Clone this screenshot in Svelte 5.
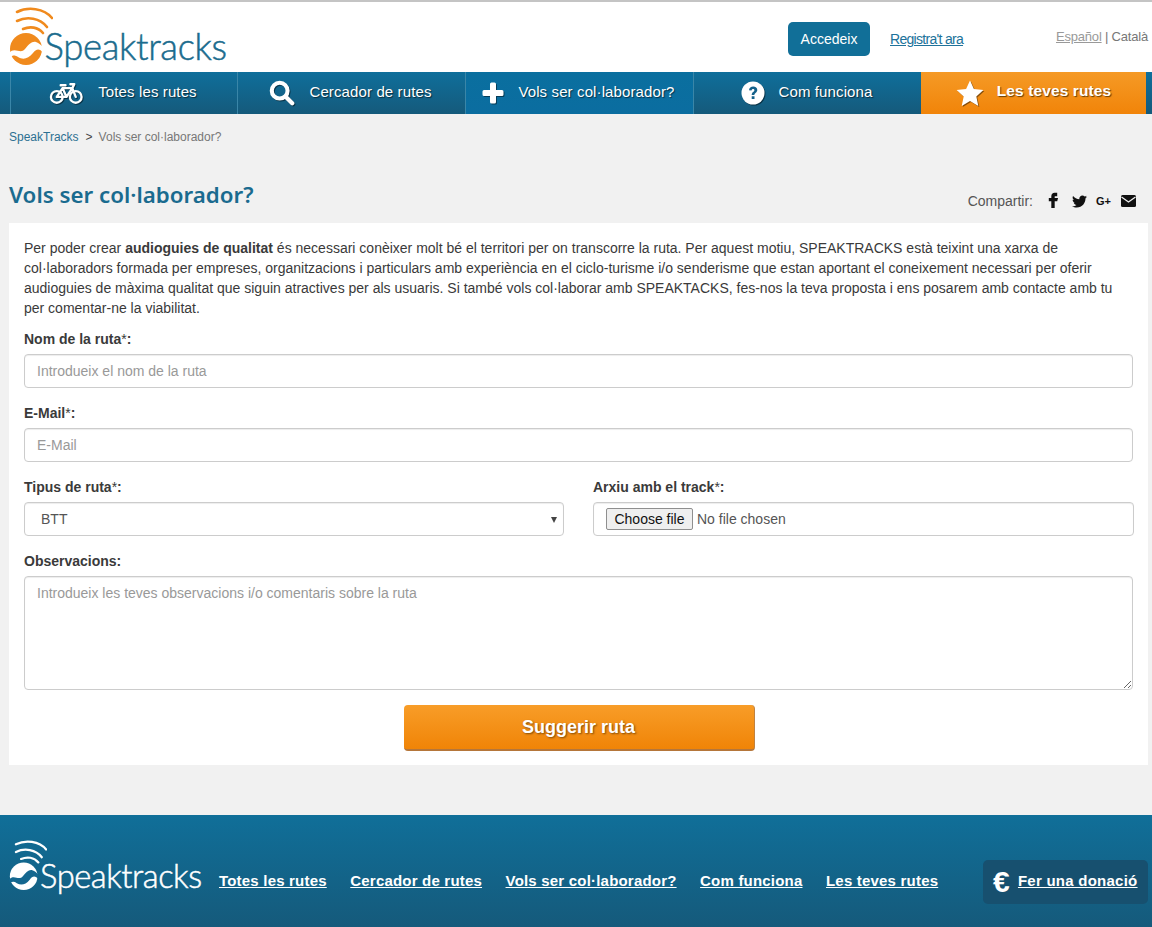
<script>
  const navItems = [
    { label: 'Totes les rutes', icon: 'bike' },
    { label: 'Cercador de rutes', icon: 'search' },
    { label: 'Vols ser col·laborador?', icon: 'plus', active: true },
    { label: 'Com funciona', icon: 'question' },
    { label: 'Les teves rutes', icon: 'star', accent: true }
  ];
  const footerLinks = ['Totes les rutes', 'Cercador de rutes', 'Vols ser col·laborador?', 'Com funciona', 'Les teves rutes'];
</script>

{#snippet mark(color, waveColor)}
  <svg class="mark" viewBox="0 0 44 58" aria-hidden="true">
    <g fill="none" stroke={color} stroke-width="2.6" stroke-linecap="round">
      <path d="M8 5 C19 -0.5 35 1 43 11" />
      <path d="M8 14 C18 9 31 11 38 20" />
      <path d="M14 22 C21 19 29 20 34 26" />
    </g>
    <circle cx="17" cy="42" r="16" fill={color} />
    <path d="M0 46 C6 39 11 48 16 42 C20 37 23 34 27 35 C30 36 32 38 34 40 L33.500 45 C30 41 27 42 24 46 C19 52 14 53 9 50 C6 48 4 48 1 50 Z" fill={waveColor} />
  </svg>
{/snippet}

<div class="page">
  <header class="top">
    <a class="logo" href="#home">
      {@render mark('#f08a1d', '#ffffff')}
      <span class="logo-text">Speaktracks</span>
    </a>
    <div class="account">
      <a class="login" href="#login">Accedeix</a>
      <a class="register" href="#register">Registra't ara</a>
    </div>
    <div class="langs"><a href="#es">Español</a> | Català</div>
  </header>

  <nav class="nav">
    {#each navItems as item}
      <a class="nav-item" class:active={item.active} class:accent={item.accent} href="#nav">
        <span class="nav-icon">
          {#if item.icon === 'bike'}
            <svg width="35" height="24" viewBox="0 0 36 24" fill="none" stroke="#fff" stroke-width="2.4" stroke-linecap="round" stroke-linejoin="round">
              <circle cx="8" cy="16" r="6" />
              <circle cx="27.5" cy="16" r="6" />
              <path d="M8 16 L14 7 L24 7 L27.5 16 M14 7 L18 16 L8 16 M18 16 L24 7 M12 4 H17 M22 3 H26 L24 7" />
            </svg>
          {:else if item.icon === 'search'}
            <svg width="26" height="26" viewBox="0 0 28 28" fill="none" stroke="#fff" stroke-linecap="round">
              <circle cx="11.5" cy="11.5" r="8.5" stroke-width="4.4" />
              <path d="M18 18 L25 25" stroke-width="4.6" />
            </svg>
          {:else if item.icon === 'plus'}
            <svg width="22" height="22" viewBox="0 0 22 22" fill="#fff">
              <path d="M8 2 a1.5 1.5 0 0 1 1.5 -1.5 h3 A1.5 1.5 0 0 1 14 2 V8 H20 a1.5 1.5 0 0 1 1.5 1.5 v3 A1.5 1.5 0 0 1 20 14 H14 V20 a1.5 1.5 0 0 1 -1.5 1.5 h-3 A1.5 1.5 0 0 1 8 20 V14 H2 a1.5 1.5 0 0 1 -1.5 -1.5 v-3 A1.5 1.5 0 0 1 2 8 H8 Z" />
            </svg>
          {:else if item.icon === 'question'}
            <svg width="24" height="24" viewBox="0 0 24 24">
              <circle cx="12" cy="12" r="11.5" fill="#fff" />
              <path d="M8 9.2 C8.2 6.8 10 5.5 12.2 5.5 C14.6 5.5 16.3 7 16.3 9 C16.3 11.6 13.4 11.8 13.4 14 H10.7 C10.7 10.8 13.4 10.8 13.4 9.2 C13.4 8.4 12.8 7.9 12 7.9 C11.2 7.9 10.7 8.5 10.5 9.5 Z M10.7 15.2 H13.5 V18 H10.7 Z" fill="#14618a" />
            </svg>
          {:else}
            <svg width="28" height="27" viewBox="0 0 28 27" fill="#fff">
              <path d="M14 0.5 L17.9 9 L27.4 10.1 L20.3 16.4 L22.3 26 L14 21.1 L5.7 26 L7.7 16.4 L0.6 10.1 L10.1 9 Z" />
            </svg>
          {/if}
        </span>
        <span class="nav-label">{item.label}</span>
      </a>
    {/each}
  </nav>

  <main class="main">
    <div class="crumbs"><a href="#home">SpeakTracks</a><span class="sep">&gt;</span><span>Vols ser col·laborador?</span></div>

    <div class="title-row">
      <h1>Vols ser col·laborador?</h1>
      <div class="share">
        <span class="share-label">Compartir:</span>
        <svg class="s-fb" width="14" height="16" viewBox="4 3 16 19" fill="#111"><path d="M14 8 h3 V4 h-3 c-2.5 0-4 1.8-4 4 v2 H7 v4 h3 v8 h4 v-8 h3 l1-4 h-4 V8.500 c0-.3.2-.5.500-.5 z" /></svg>
        <svg class="s-tw" width="15" height="15" viewBox="0 0 512 512" fill="#111"><path d="M459.37 151.716c.325 4.548.325 9.097.325 13.645 0 138.72-105.583 298.558-298.558 298.558-59.452 0-114.68-17.219-161.137-47.106 8.447.974 16.568 1.299 25.34 1.299 49.055 0 94.213-16.568 130.274-44.832-46.132-.975-84.792-31.188-98.112-72.772 6.498.974 12.995 1.624 19.818 1.624 9.421 0 18.843-1.3 27.614-3.573-48.081-9.747-84.143-51.98-84.143-102.985v-1.299c13.969 7.797 30.214 12.67 47.431 13.319-28.264-18.843-46.781-51.005-46.781-87.391 0-19.492 5.197-37.36 14.294-52.954 51.655 63.675 129.3 105.258 216.365 109.807-1.624-7.797-2.599-15.918-2.599-24.04 0-57.828 46.782-104.934 104.934-104.934 30.213 0 57.502 12.67 76.67 33.137 23.715-4.548 46.456-13.32 66.599-25.34-7.798 24.366-24.366 44.833-46.132 57.827 21.117-2.273 41.584-8.122 60.426-16.243-14.292 20.791-32.161 39.308-52.628 54.253z" /></svg>
        <span class="s-gp">G+</span>
        <svg class="s-mail" width="15" height="12" viewBox="0 0 15 12"><rect width="15" height="12" rx="1.500" fill="#111" /><path d="M0.500 2 L7.500 7 L14.500 2" fill="none" stroke="#f1f1f1" stroke-width="1.300" /></svg>
      </div>
    </div>

    <section class="panel">
      <p class="intro">Per poder crear <strong>audioguies de qualitat</strong> és necessari conèixer molt bé el territori per on transcorre la ruta. Per aquest motiu, SPEAKTRACKS està teixint una xarxa de col·laboradors formada per empreses, organitzacions i particulars amb experiència en el ciclo-turisme i/o senderisme que estan aportant el coneixement necessari per oferir audioguies de màxima qualitat que siguin atractives per als usuaris. Si també vols col·laborar amb SPEAKTACKS, fes-nos la teva proposta i ens posarem amb contacte amb tu per comentar-ne la viabilitat.</p>

      <form class="form" onsubmit={(e) => e.preventDefault()}>
        <div class="field">
          <label for="nom">Nom de la ruta<span class="req">*</span>:</label>
          <input id="nom" class="control" type="text" placeholder="Introdueix el nom de la ruta" />
        </div>
        <div class="field">
          <label for="mail">E-Mail<span class="req">*</span>:</label>
          <input id="mail" class="control" type="text" placeholder="E-Mail" />
        </div>
        <div class="cols">
          <div class="field">
            <label for="tipus">Tipus de ruta<span class="req">*</span>:</label>
            <div class="select-wrap">
              <select id="tipus" class="control select"><option>BTT</option></select>
            </div>
          </div>
          <div class="field">
            <label for="arxiu">Arxiu amb el track<span class="req">*</span>:</label>
            <div class="control file">
              <button id="arxiu" class="file-btn" type="button">Choose file</button>
              <span>No file chosen</span>
            </div>
          </div>
        </div>
        <div class="field">
          <label for="obs">Observacions:</label>
          <textarea id="obs" class="control area" placeholder="Introdueix les teves observacions i/o comentaris sobre la ruta"></textarea>
        </div>
        <div class="actions"><button class="submit" type="submit">Suggerir ruta</button></div>
      </form>
    </section>
  </main>

  <footer class="footer">
    <a class="logo foot-logo" href="#home">
      {@render mark('#ffffff', '#14678f')}
      <span class="logo-text">Speaktracks</span>
    </a>
    <div class="foot-links">
      {#each footerLinks as link}
        <a href="#f">{link}</a>
      {/each}
    </div>
    <div class="donate"><span class="euro">€</span><a href="#d">Fer una donació</a></div>
  </footer>
</div>

<style>
  :global(body) {
    margin: 0;
    background: #f1f1f1;
    font-family: "Liberation Sans", Arial, sans-serif;
    font-size: 14px;
    color: #333;
  }
  .page {
    height: 927px;
    overflow: hidden;
    display: flex;
    flex-direction: column;
  }
  a { color: inherit; }

  .top {
    height: 70px;
    flex: none;
    display: flex;
    align-items: flex-start;
    background: #fff;
    border-top: 2px solid #c4c4c4;
  }
  .logo {
    display: flex;
    text-decoration: none;
    color: #1b6c8e;
  }
  .top .logo { margin: 5px 0 0 9px; width: 779px; }
  .mark { width: 44px; height: 58px; flex: none; }
  .logo-text {
    font-family: Lato, sans-serif;
    font-weight: 300;
    font-size: 36.500px;
    line-height: 44px;
    letter-spacing: -0.35px;
    -webkit-text-stroke: 0.5px currentColor;
    margin: 17px 0 0 -8.500px;
  }
  .account { display: flex; align-items: center; margin-top: 20px; }
  .login {
    width: 82px;
    height: 34px;
    display: flex;
    align-items: center;
    justify-content: center;
    background: #116f98;
    color: #fff;
    border-radius: 5px;
    text-decoration: none;
    font-size: 14px;
  }
  .register {
    margin-left: 20px;
    color: #20729a;
    font-size: 14px;
    letter-spacing: -0.7px;
    width: 166px;
  }
  .langs {
    margin-top: 27px;
    font-size: 13px;
    letter-spacing: -0.2px;
    color: #777;
    white-space: nowrap;
    width: 96px;
  }
  .langs a { color: #999; }

  .nav {
    height: 42px;
    flex: none;
    display: grid;
    grid-template-columns: 227px 228px 228px 228px 225px;
    padding-left: 10px;
    background: linear-gradient(#0f6f9b, #155a7b);
    color: #fff;
  }
  .nav-item {
    display: flex;
    align-items: center;
    justify-content: center;
    gap: 14px;
    padding-right: 2px;
    border-left: 1px solid #3a86a8;
    color: #fff;
    text-decoration: none;
    font-size: 15px;
    letter-spacing: 0.12px;
    text-shadow: 1px 1px 1px rgba(0, 0, 0, 0.55);
  }
  .nav-label { margin-bottom: 4px; }
  .nav-item.active { background: linear-gradient(#0a6f9f, #0b6da0); }
  .nav-item.accent {
    background: linear-gradient(#f59a26, #f18409);
    border-left: 0;
    padding-right: 0;
    gap: 13px;
    font-weight: bold;
    font-size: 15.500px;
    text-shadow: 1px 1px 1px rgba(70, 40, 0, 0.8);
  }
  .nav-icon { display: flex; filter: drop-shadow(1px 1px 0 rgba(0, 0, 0, 0.45)); }

  .main { flex: 1; padding: 0 4px 0 9px; min-height: 0; }
  .crumbs {
    height: 46px;
    display: flex;
    align-items: center;
    font-size: 12px;
    color: #777;
  }
  .crumbs a { color: #2c7092; text-decoration: none; }
  .sep { margin: 0 6px 0 7px; color: #444; }

  .title-row {
    height: 63px;
    display: flex;
    align-items: flex-end;
    justify-content: space-between;
  }
  h1 {
    margin: 0 0 13px;
    font-family: "Noto Sans", "Open Sans", sans-serif;
    font-weight: 600;
    font-size: 22.300px;
    line-height: 30px;
    color: #1a6b8f;
  }
  .share {
    display: flex;
    align-items: center;
    margin: 0 12px 13px 0;
    height: 18px;
  }
  .share-label { color: #555; font-size: 14px; margin-right: 13px; }
  .s-fb { margin-bottom: 2px; }
  .s-tw { margin-left: 12px; }
  .s-gp { margin-left: 9px; width: 15px; font-size: 11px; font-weight: bold; color: #111; }
  .s-mail { margin-left: 10px; }

  .panel {
    background: #fff;
    padding: 15px 15px 14px;
  }
  .intro { margin: 0 0 11px; font-size: 14px; line-height: 20px; color: #3a3a3a; }
  .form { display: flex; flex-direction: column; }
  .field { display: flex; flex-direction: column; margin-bottom: 15px; }
  .field label { font-weight: bold; line-height: 20px; margin-bottom: 5px; color: #3a3a3a; }
  .req { font-weight: normal; }
  .cols { display: grid; grid-template-columns: 540px 541px; gap: 29px; }
  .control {
    box-sizing: border-box;
    width: 100%;
    height: 34px;
    border: 1px solid #ccc;
    border-radius: 4px;
    background: #fff;
    padding: 6px 12px;
    font: 14px "Liberation Sans", Arial, sans-serif;
    color: #555;
    box-shadow: inset 0 1px 1px rgba(0, 0, 0, 0.075);
  }
  .control::placeholder { color: #999; opacity: 1; }
  .select-wrap { position: relative; }
  .select { appearance: none; display: block; padding-left: 16px; }
  .select-wrap::after {
    content: "";
    position: absolute;
    right: 7px;
    top: 15px;
    border-left: 3.500px solid transparent;
    border-right: 3.500px solid transparent;
    border-top: 6px solid #444;
    pointer-events: none;
  }
  .file { display: flex; align-items: center; gap: 4px; }
  .file-btn {
    box-sizing: border-box;
    width: 87px;
    height: 22px;
    padding: 0;
    background: #efefef;
    border: 1px solid #8f8f8f;
    border-radius: 2px;
    color: #111;
    font: 14px "Liberation Sans", Arial, sans-serif;
  }
  .area { height: 114px; resize: vertical; display: block; padding-top: 8px; }
  .actions { display: flex; justify-content: center; padding-left: 1px; }
  .submit {
    width: 351px;
    height: 46px;
    border: 0;
    border-bottom: 2px solid #b5763a;
    border-right: 1px solid #c08240;
    border-radius: 4px;
    background: linear-gradient(#f89d28, #f08407);
    color: #fff;
    font: bold 18px "Liberation Sans", Arial, sans-serif;
    text-shadow: 1px 1px 2px rgba(90, 50, 0, 0.75);
    padding: 0;
  }

  .footer {
    height: 112px;
    flex: none;
    display: flex;
    align-items: flex-start;
    background: linear-gradient(#106f99, #155a7b);
    color: #fff;
  }
  .foot-logo { color: #fff; margin: 24px 0 0 9px; width: 210px; }
  .foot-logo .mark { width: 38px; height: 52px; }
  .foot-logo .logo-text { font-size: 32.700px; line-height: 40px; margin: 17px 0 0 -7px; letter-spacing: -0.45px; }
  .foot-links {
    display: flex;
    gap: 23.500px;
    margin-top: 57px;
    width: 764px;
    font-weight: bold;
    font-size: 15px;
    line-height: 18px;
    letter-spacing: 0.2px;
  }
  .foot-links a { color: #fff; }
  .donate {
    box-sizing: border-box;
    width: 165px;
    height: 44px;
    margin-top: 45px;
    background: #17506f;
    border-radius: 5px;
    display: flex;
    align-items: center;
    padding: 0 0 3px 10px;
    font-weight: bold;
    font-size: 15px;
    letter-spacing: 0.25px;
  }
  .donate a { color: #fff; }
  .euro { font-size: 30px; margin-right: 8px; line-height: 1; position: relative; top: 1.500px; }
</style>
